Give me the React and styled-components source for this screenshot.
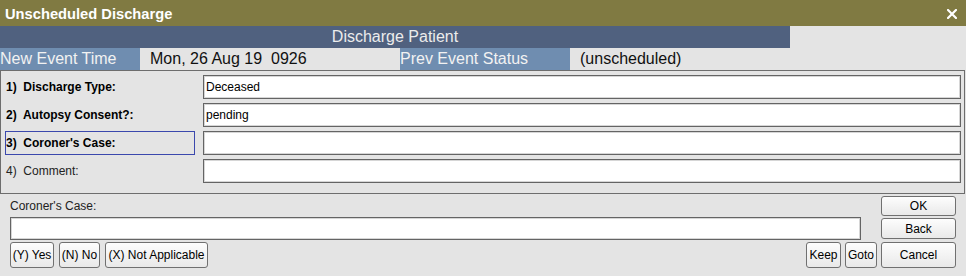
import styled, { createGlobalStyle } from "styled-components";

const GlobalStyle = createGlobalStyle`
  html, body {
    margin: 0;
    padding: 0;
    background: #e4e4e4;
  }
  body {
    font-family: "Liberation Sans", Arial, sans-serif;
  }
`;

const Window = styled.div`
  width: 966px;
  height: 276px;
  background: #e4e4e4;
  display: flex;
  flex-direction: column;
  overflow: hidden;
`;

const TitleBar = styled.div`
  height: 26px;
  background: #807a42;
  display: flex;
  align-items: center;
  justify-content: space-between;
  padding: 0 9px 0 5px;
  box-sizing: border-box;
`;

const Title = styled.span`
  color: #fff;
  font-weight: bold;
  font-size: 14.7px;
  padding-top: 1px;
`;

const CloseButton = styled.button`
  border: 0;
  background: none;
  padding: 0;
  display: flex;
  cursor: pointer;
  margin-top: 2px;
`;

const HeaderRow = styled.div`
  height: 22px;
  display: grid;
  grid-template-columns: 790px 1fr;
`;

const HeaderCell = styled.div`
  background: #50617f;
  color: #ececec;
  font-size: 16px;
  display: flex;
  align-items: center;
  justify-content: center;
`;

const InfoRow = styled.div`
  height: 22px;
  display: grid;
  grid-template-columns: 140px 260px 170px 1fr;
`;

const InfoLabel = styled.div`
  background: #6f8db0;
  color: #f2f2f2;
  font-size: 16px;
  display: flex;
  align-items: center;
`;

const InfoValue = styled.div`
  color: #111;
  font-size: 16px;
  display: flex;
  align-items: center;
  padding-left: 10px;
  white-space: pre;
`;

const FormPanel = styled.div`
  height: 124px;
  box-sizing: border-box;
  border: 1px solid #6d6d6d;
  margin-right: 1px;
  padding: 4px 3px 0 4px;
  display: grid;
  grid-template-columns: 190px 1fr;
  grid-auto-rows: 24px;
  column-gap: 8px;
  row-gap: 4px;
`;

const FieldLabel = styled.div`
  display: flex;
  align-items: center;
  font-size: 12px;
  font-weight: ${(p) => (p.$required ? "bold" : "normal")};
  color: ${(p) => (p.$required ? "#000" : "#222")};
  border: 1px solid ${(p) => (p.$focused ? "#3b48ad" : "transparent")};
  box-sizing: border-box;
  white-space: pre;
  padding-left: 0;
`;

const TextField = styled.input`
  box-sizing: border-box;
  height: ${(p) => p.$h || 24}px;
  width: 100%;
  border: 1px solid #646464;
  box-shadow: inset 0 0 0 1px #d6d6d6;
  background: #fff;
  font-family: "Liberation Sans", Arial, sans-serif;
  font-size: 12px;
  color: #000;
  padding: 0 2px;
  outline: none;
  margin: 0;
`;

const Bottom = styled.div`
  display: grid;
  grid-template-columns: 1fr 75px;
  grid-template-rows: 20px 21px 27px;
  column-gap: 4px;
  row-gap: 2px;
  padding: 2px 10px 0 10px;
`;

const CaseLabel = styled.div`
  font-size: 12px;
  color: #222;
  display: flex;
  align-items: center;
  padding-bottom: 1px;
`;

const CaseInputWrap = styled.div`
  display: flex;
  align-items: center;
  margin-right: 16px;
  margin-top: -1px;
`;

const ButtonBar = styled.div`
  display: flex;
  justify-content: space-between;
  margin-top: 1px;
`;

const ButtonGroup = styled.div`
  display: flex;
  gap: ${(p) => p.$gap}px;
`;

const Button = styled.button`
  box-sizing: border-box;
  width: ${(p) => (p.$w ? `${p.$w}px` : "100%")};
  height: 100%;
  padding: 0;
  border: 1px solid #707070;
  border-radius: 3px;
  background: linear-gradient(#fdfdfd, #e9e9e9);
  font-family: "Liberation Sans", Arial, sans-serif;
  font-size: 12px;
  color: #000;
  white-space: nowrap;
  cursor: pointer;
`;

const ActionCell = styled.div`
  display: flex;
  margin-top: ${(p) => p.$mt || 0}px;
`;

const fields = [
  { label: "1)  Discharge Type:", value: "Deceased", required: true },
  { label: "2)  Autopsy Consent?:", value: "pending", required: true },
  { label: "3)  Coroner's Case:", value: "", required: true, focused: true },
  { label: "4)  Comment:", value: "", required: false },
];

export default function App() {
  return (
    <>
      <GlobalStyle />
      <Window>
        <TitleBar>
          <Title>Unscheduled Discharge</Title>
          <CloseButton aria-label="Close">
            <svg width="10" height="10" viewBox="0 0 10 10">
              <path d="M1 1 L9 9 M9 1 L1 9" stroke="#fff" strokeWidth="2.2" strokeLinecap="square" />
            </svg>
          </CloseButton>
        </TitleBar>

        <HeaderRow>
          <HeaderCell>Discharge Patient</HeaderCell>
          <div />
        </HeaderRow>

        <InfoRow>
          <InfoLabel>New Event Time</InfoLabel>
          <InfoValue>Mon, 26 Aug 19  0926</InfoValue>
          <InfoLabel>Prev Event Status</InfoLabel>
          <InfoValue>(unscheduled)</InfoValue>
        </InfoRow>

        <FormPanel>
          {fields.map((f) => (
            <Field key={f.label} {...f} />
          ))}
        </FormPanel>

        <Bottom>
          <CaseLabel>Coroner's Case:</CaseLabel>
          <ActionCell>
            <Button>OK</Button>
          </ActionCell>

          <CaseInputWrap>
            <TextField $h={23} defaultValue="" />
          </CaseInputWrap>
          <ActionCell>
            <Button>Back</Button>
          </ActionCell>

          <ButtonBar>
            <ButtonGroup $gap={5}>
              <Button $w={44}>(Y) Yes</Button>
              <Button $w={41}>(N) No</Button>
              <Button $w={103}>(X) Not Applicable</Button>
            </ButtonGroup>
            <ButtonGroup $gap={4}>
              <Button $w={35}>Keep</Button>
              <Button $w={32}>Goto</Button>
            </ButtonGroup>
          </ButtonBar>
          <ActionCell $mt={1}>
            <Button>Cancel</Button>
          </ActionCell>
        </Bottom>
      </Window>
    </>
  );
}

function Field({ label, value, required, focused }) {
  return (
    <>
      <FieldLabel $required={required} $focused={focused}>
        {label}
      </FieldLabel>
      <TextField defaultValue={value} />
    </>
  );
}
